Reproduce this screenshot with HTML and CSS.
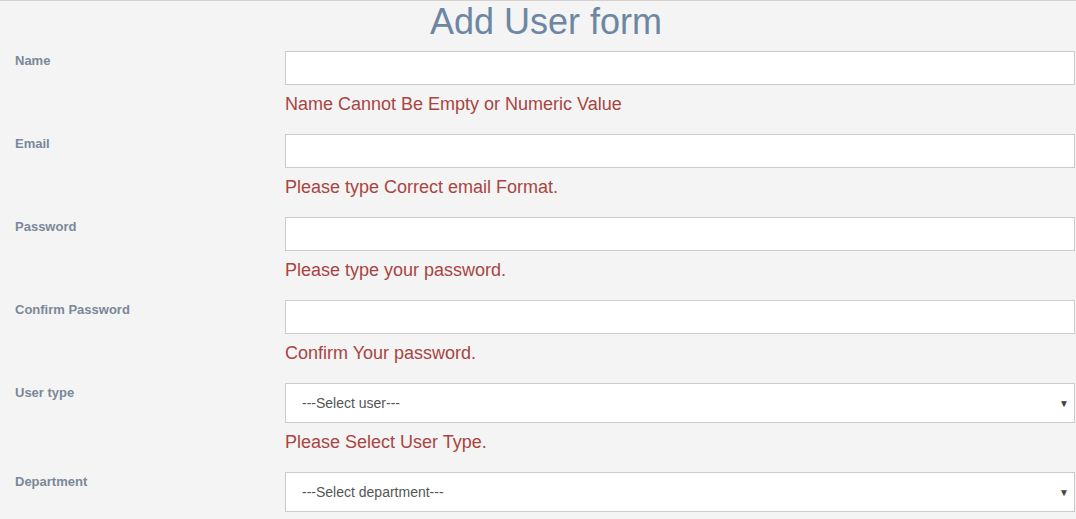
FILE: index.html
```html
<!DOCTYPE html>
<html>
<head>
<meta charset="utf-8">
<link rel="stylesheet" href="styles.css">
</head>
<body>
<div class="page">
  <h1 class="title">Add User form</h1>
  <form class="form">
    <div class="row">
      <label class="label">Name</label>
      <div class="field">
        <input class="input" type="text">
        <div class="error">Name Cannot Be Empty or Numeric Value</div>
      </div>
    </div>
    <div class="row">
      <label class="label">Email</label>
      <div class="field">
        <input class="input" type="text">
        <div class="error">Please type Correct email Format.</div>
      </div>
    </div>
    <div class="row">
      <label class="label">Password</label>
      <div class="field">
        <input class="input" type="password">
        <div class="error">Please type your password.</div>
      </div>
    </div>
    <div class="row">
      <label class="label">Confirm Password</label>
      <div class="field">
        <input class="input" type="password">
        <div class="error">Confirm Your password.</div>
      </div>
    </div>
    <div class="row">
      <label class="label">User type</label>
      <div class="field">
        <div class="select"><span>---Select user---</span><span class="arrow">▼</span></div>
        <div class="error">Please Select User Type.</div>
      </div>
    </div>
    <div class="row">
      <label class="label">Department</label>
      <div class="field">
        <div class="select"><span>---Select department---</span><span class="arrow">▼</span></div>
      </div>
    </div>
  </form>
</div>
</body>
</html>
```
FILE: styles.css
```css
html, body {
  margin: 0;
  padding: 0;
  background: #f4f4f4;
  font-family: "Liberation Sans", Arial, sans-serif;
}
.page {
  border-top: 1px solid #d6d1cd;
  min-height: 518px;
}
.title {
  margin: 0;
  font-size: 36px;
  font-weight: normal;
  line-height: 42px;
  color: #6d86a3;
  text-align: center;
  padding-left: 16px;
}
.form {
  display: flex;
  flex-direction: column;
  padding-top: 8px;
}
.row {
  display: grid;
  grid-template-columns: 285px 1fr;
}
.label {
  padding-left: 15px;
  padding-top: 1px;
  font-size: 13px;
  font-weight: bold;
  line-height: 18px;
  color: #7b8899;
}
.field {
  display: flex;
  flex-direction: column;
  padding-right: 1px;
}
.input {
  box-sizing: border-box;
  height: 34px;
  margin: 0;
  border: 1px solid #cccccc;
  background: #fff;
  font: inherit;
}
.select {
  box-sizing: border-box;
  height: 40px;
  border: 1px solid #cccccc;
  background: #fff;
  display: flex;
  align-items: center;
  justify-content: space-between;
  padding: 0 5px 0 16px;
  font-size: 14px;
  color: #555;
}
.arrow {
  font-size: 10px;
  color: #444;
}
.error {
  font-size: 18px;
  line-height: 24px;
  color: #a94442;
  padding: 7px 0 18px;
}
```
